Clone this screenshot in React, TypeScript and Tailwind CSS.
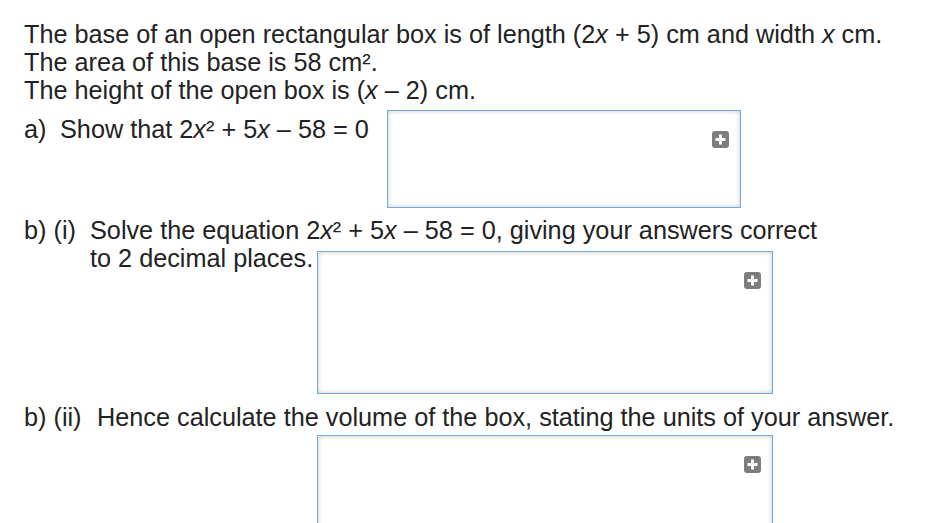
import React from "react";

function PlusBadge() {
  return (
    <span className="absolute top-[20px] right-[11px] flex h-[17px] w-[17px] items-center justify-center rounded-[3px] bg-[#7d7d7d]">
      <svg viewBox="0 0 17 17" className="h-[17px] w-[17px]">
        <path d="M8.5 3.5v10M3.5 8.5h10" stroke="#fff" strokeWidth="3" strokeLinecap="butt" />
      </svg>
    </span>
  );
}

function AnswerBox({ className }: { className: string }) {
  return (
    <div
      className={
        "relative shrink-0 border border-[#72a9dc] bg-white shadow-[inset_0_0_5px_rgba(0,0,0,0.22)] " +
        className
      }
    >
      <PlusBadge />
    </div>
  );
}

export default function App() {
  return (
    <div className="min-h-screen overflow-hidden bg-white pl-[24px] pt-[20px] font-['Liberation_Sans',Arial,sans-serif] text-[25.25px] leading-[28px] text-[#222]">
      <p>
        The base of an open rectangular box is of length (2<i>x</i> + 5) cm and width <i>x</i> cm.
        <br />
        The area of this base is 58 cm².
        <br />
        The height of the open box is (<i>x</i> – 2) cm.
      </p>

      <div className="mt-[6px] flex items-start">
        <div className="mt-[5px] whitespace-nowrap">
          <span className="inline-block w-[36px]">a)</span>Show that 2<i>x</i>² + 5<i>x</i> – 58 = 0
        </div>
        <AnswerBox className="ml-[18px] h-[98px] w-[354px]" />
      </div>

      <div className="mt-[8px] flex items-start">
        <span className="inline-block w-[66px] shrink-0 whitespace-nowrap">b) (i)</span>
        <div>
          <div className="whitespace-nowrap">
            Solve the equation 2<i>x</i>² + 5<i>x</i> – 58 = 0, giving your answers correct
          </div>
          <div className="flex items-start">
            <span className="whitespace-nowrap">to 2 decimal places.</span>
            <AnswerBox className="ml-[4px] mt-[7px] h-[143px] w-[456px]" />
          </div>
        </div>
      </div>

      <div className="mt-[9px] flex whitespace-nowrap">
        <span className="inline-block w-[73px] shrink-0">b) (ii)</span>
        Hence calculate the volume of the box, stating the units of your answer.
      </div>

      <div className="mt-[4px] pl-[293px]">
        <AnswerBox className="h-[143px] w-[456px]" />
      </div>
    </div>
  );
}
